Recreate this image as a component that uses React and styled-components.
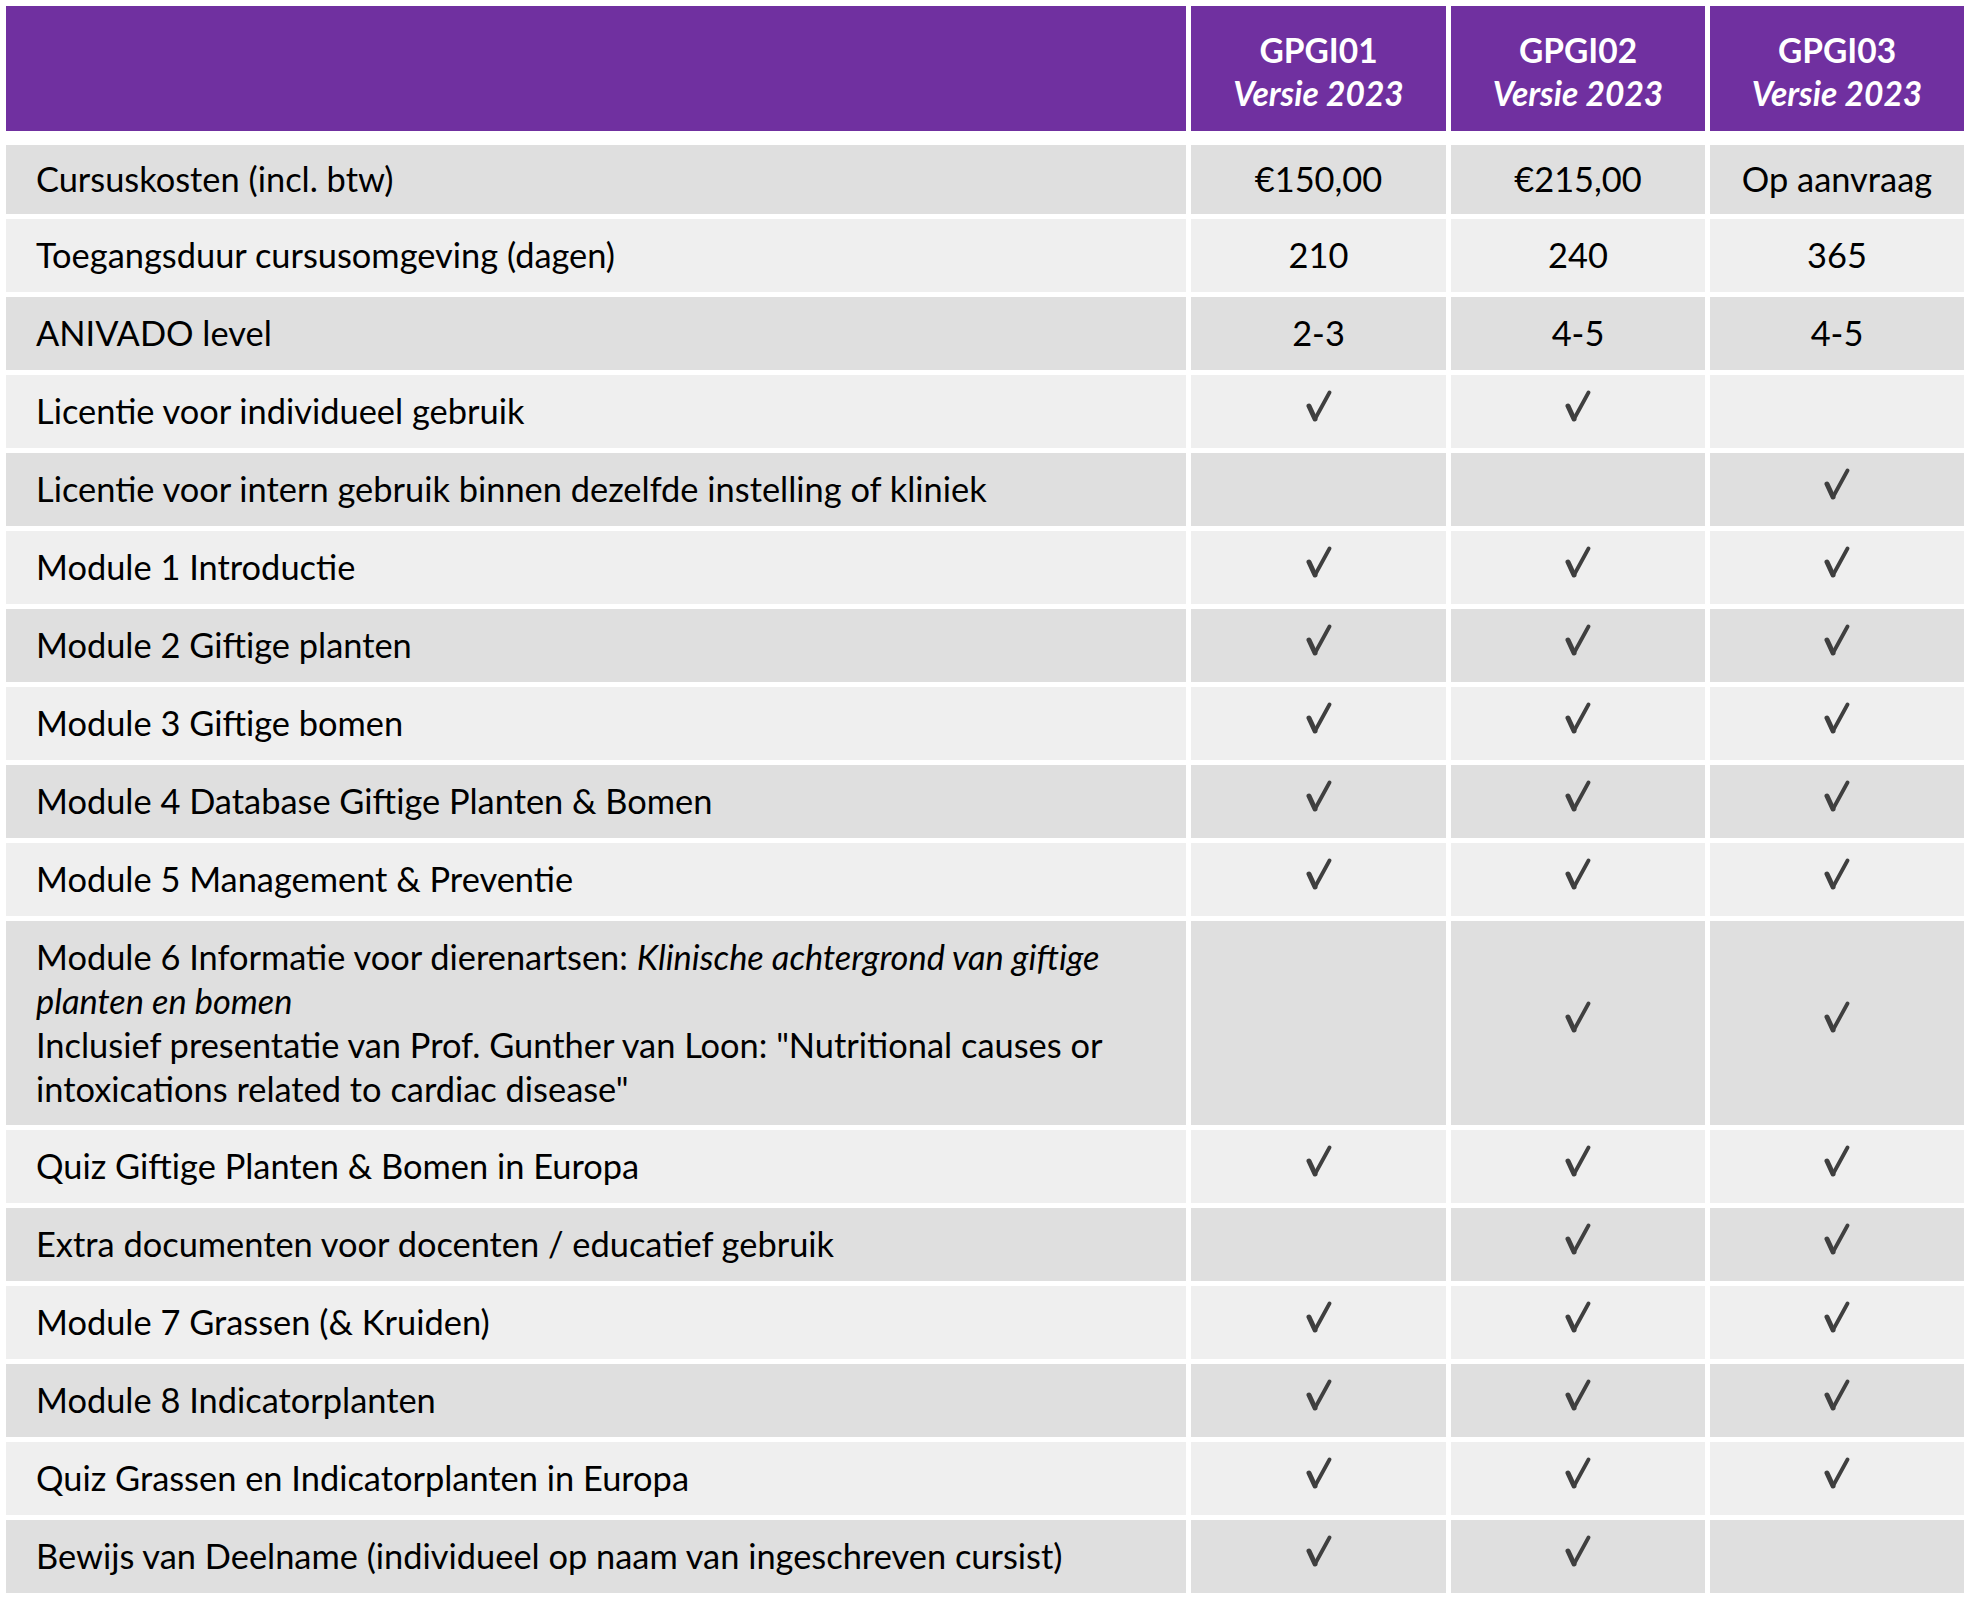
import React from 'react'
import styled, { createGlobalStyle } from 'styled-components'

const GlobalStyle = createGlobalStyle`
  html, body {
    margin: 0;
    padding: 0;
    background: #ffffff;
  }
  body {
    font-family: Lato, "Open Sans", "Liberation Sans", sans-serif;
    color: #000;
  }
`

const COLS = '1180px 255px 254px 254px'

const rows = [
  { label: 'Cursuskosten (incl. btw)', values: ['€150,00', '€215,00', 'Op aanvraag'] },
  { label: 'Toegangsduur cursusomgeving (dagen)', values: ['210', '240', '365'] },
  { label: 'ANIVADO level', values: ['2-3', '4-5', '4-5'] },
  { label: 'Licentie voor individueel gebruik', values: [true, true, false] },
  { label: 'Licentie voor intern gebruik binnen dezelfde instelling of kliniek', values: [false, false, true] },
  { label: 'Module 1 Introductie', values: [true, true, true] },
  { label: 'Module 2 Giftige planten', values: [true, true, true] },
  { label: 'Module 3 Giftige bomen', values: [true, true, true] },
  { label: 'Module 4 Database Giftige Planten & Bomen', values: [true, true, true] },
  { label: 'Module 5 Management & Preventie', values: [true, true, true] },
  { label: 'module6', values: [false, true, true] },
  { label: 'Quiz Giftige Planten & Bomen in Europa', values: [true, true, true] },
  { label: 'Extra documenten voor docenten / educatief gebruik', values: [false, true, true] },
  { label: 'Module 7 Grassen (& Kruiden)', values: [true, true, true] },
  { label: 'Module 8 Indicatorplanten', values: [true, true, true] },
  { label: 'Quiz Grassen en Indicatorplanten in Europa', values: [true, true, true] },
  { label: 'Bewijs van Deelname (individueel op naam van ingeschreven cursist)', values: [true, true, false] },
]

const versions = ['GPGI01', 'GPGI02', 'GPGI03']

// check glyph drawn as svg, thick short left stroke + long right stroke
const Check = () => (
  <CheckSvg viewBox="0 0 28 32" aria-label="✓">
    <path d="M4 16 L10 29" stroke="#3f3f3f" strokeWidth="5" strokeLinecap="round" fill="none" />
    <path d="M10 29 L24.5 2.5" stroke="#3f3f3f" strokeWidth="3.8" strokeLinecap="round" fill="none" />
  </CheckSvg>
)

export default function App() {
  return (
    <Page>
      <GlobalStyle />
      <Table>
        <HeaderRow>
          <HeadCell />
          {versions.map(v => (
            <HeadCell key={v}>
              <Code>{v}</Code>
              <Version>Versie 2023</Version>
            </HeadCell>
          ))}
        </HeaderRow>
        <Body>
          {rows.map((r, i) => (
            <Row key={i} $dark={i % 2 === 0} $short={i === 0}>
              {r.label === 'module6' ? (
                <LabelCell $tall>
                  <span>
                    Module 6 Informatie voor dierenartsen: <em>Klinische achtergrond van giftige</em>
                    <br />
                    <em>planten en bomen</em>
                    <br />
                    Inclusief presentatie van Prof. Gunther van Loon: "Nutritional causes or
                    <br />
                    intoxications related to cardiac disease"
                  </span>
                </LabelCell>
              ) : (
                <LabelCell>{r.label}</LabelCell>
              )}
              {r.values.map((v, j) => (
                <ValueCell key={j}>
                  {v === true ? <Check /> : v === false ? null : v}
                </ValueCell>
              ))}
            </Row>
          ))}
        </Body>
      </Table>
    </Page>
  )
}

const Page = styled.div`
  padding: 6px;
  width: 1958px;
`

const Table = styled.div`
  display: flex;
  flex-direction: column;
  gap: 14px;
  width: 1958px;
`

const HeaderRow = styled.div`
  display: grid;
  grid-template-columns: ${COLS};
  column-gap: 5px;
  height: 125px;
`

const HeadCell = styled.div`
  background: #7030a0;
  color: #ffffff;
  display: flex;
  flex-direction: column;
  align-items: center;
  justify-content: center;
  font-weight: 700;
  font-size: 33.5px;
  line-height: 43px;
  padding-top: 6px;
`

const Code = styled.div``

const Version = styled.div`
  font-style: italic;
`

const Body = styled.div`
  display: flex;
  flex-direction: column;
  gap: 5px;
`

const Row = styled.div`
  display: grid;
  grid-template-columns: ${COLS};
  column-gap: 5px;
  min-height: ${p => (p.$short ? '69px' : '73px')};

  & > div {
    background: ${p => (p.$dark ? '#dfdfdf' : '#efefef')};
  }
`

const LabelCell = styled.div`
  display: flex;
  align-items: center;
  padding: ${p => (p.$tall ? '14px 20px 14px 30px' : '0 20px 2px 30px')};
  font-size: 34.4px;
  line-height: 44px;
  white-space: nowrap;

  em {
    font-style: italic;
  }
`

const ValueCell = styled.div`
  display: flex;
  align-items: center;
  justify-content: center;
  font-size: 34.4px;
  line-height: 44px;
  padding-bottom: 2px;
`

const CheckSvg = styled.svg`
  width: 28px;
  height: 32px;
  margin-bottom: 10px;
`
